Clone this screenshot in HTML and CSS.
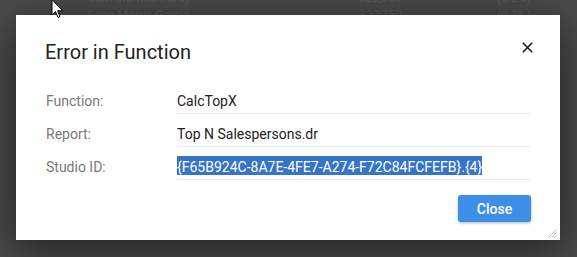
FILE: index.html
```html
<!DOCTYPE html>
<html>
<head>
<meta charset="utf-8">
<link rel="stylesheet" href="styles.css">
</head>
<body>
<div class="page">
  <div class="bg-row">
    <span class="bg-name">Sam Morrison Gray</span>
    <span class="bg-num">322,350</span>
    <span class="bg-pct">(0.2%)</span>
  </div>
  <div class="bg-row">
    <span class="bg-name">Sean Morris Garcia</span>
    <span class="bg-num">322,750</span>
    <span class="bg-pct">(0.3%)</span>
  </div>
</div>

<svg class="cursor" width="13" height="21" viewBox="0 0 13 21">
  <path d="M1 0.5 L1 16 L4.5 12.5 L7 18.5 L9 17.6 L6.6 11.8 L11.5 11.8 Z" fill="#fff" stroke="#000" stroke-width="1" stroke-linejoin="miter"/>
</svg>

<div class="dialog">
  <div class="dialog-header">
    <h1 class="dialog-title">Error in Function</h1>
    <button class="dialog-close" aria-label="Close">
      <svg width="11" height="11" viewBox="0 0 11 11"><path d="M0.8 0.8 L10.2 10.2 M10.2 0.8 L0.8 10.2" stroke="#1a1a1a" stroke-width="1.6" fill="none"/></svg>
    </button>
  </div>
  <div class="dialog-body">
    <div class="info-row">
      <div class="info-label">Function:</div>
      <div class="info-value">CalcTopX</div>
    </div>
    <div class="info-row">
      <div class="info-label">Report:</div>
      <div class="info-value">Top N Salespersons.dr</div>
    </div>
    <div class="info-row">
      <div class="info-label">Studio ID:</div>
      <div class="info-value"><span class="selected">{F65B924C-8A7E-4FE7-A274-F72C84FCFEFB}.{4}</span></div>
    </div>
  </div>
  <div class="dialog-footer">
    <button class="btn-primary">Close</button>
  </div>
  <svg class="grip" width="10" height="10" viewBox="0 0 10 10">
    <path d="M9.5 1.5 L1.5 9.5 M9.5 4.5 L4.5 9.5 M9.5 7.5 L7.5 9.5" stroke="#b8b8b8" stroke-width="1" fill="none"/>
  </svg>
</div>
</body>
</html>
```
FILE: styles.css
```css
html, body {
  margin: 0;
  padding: 0;
}
body {
  width: 577px;
  height: 257px;
  overflow: hidden;
  background: #4a4a4a;
  font-family: Roboto, "Liberation Sans", sans-serif;
  position: relative;
}
.page {
  margin-top: -10px;
  display: flex;
  flex-direction: column;
}
.bg-row {
  display: flex;
  font-size: 12px;
  line-height: 17px;
  color: #5a5a5a;
}
.bg-name {
  margin-left: 88px;
  width: 271px;
}
.bg-num {
  width: 138px;
}
.cursor {
  position: absolute;
  left: 51px;
  top: -1px;
  z-index: 5;
}
.dialog {
  position: absolute;
  left: 16px;
  top: 15px;
  width: 544px;
  height: 225px;
  background: #fff;
  box-shadow: 0 10px 40px rgba(0, 0, 0, 0.55);
  display: flex;
  flex-direction: column;
}
.dialog-header {
  display: flex;
  justify-content: space-between;
  align-items: flex-start;
  padding: 25px 27px 0 29px;
}
.dialog-title {
  margin: 0;
  font-size: 20px;
  line-height: 24px;
  font-weight: 400;
  color: #222;
}
.dialog-close {
  border: 0;
  background: none;
  padding: 0;
  margin-top: 2px;
  width: 11px;
  height: 11px;
  display: flex;
}
.dialog-body {
  padding: 17px 30px 0 30px;
}
.info-row {
  display: grid;
  grid-template-columns: 131px 1fr;
  font-size: 14px;
  line-height: 18px;
}
.info-label {
  color: #777;
  padding: 11px 0 4px;
}
.info-value {
  color: #222;
  padding: 11px 0 3px;
  border-bottom: 1px solid #ebebeb;
}
.selected {
  background: #3574c6;
  color: #fff;
  padding-top: 3px;
}
.dialog-footer {
  display: flex;
  justify-content: flex-end;
  padding: 15px 29px 0 0;
}
.btn-primary {
  width: 73px;
  height: 27px;
  border: 0;
  border-radius: 3px;
  background: #3c8ee6;
  color: #fff;
  font-family: Roboto, "Liberation Sans", sans-serif;
  font-size: 14px;
  font-weight: 500;
  box-shadow: 0 1px 3px rgba(0, 0, 0, 0.3);
  padding: 0;
}
.grip {
  position: absolute;
  right: 3px;
  bottom: 2px;
}
```
